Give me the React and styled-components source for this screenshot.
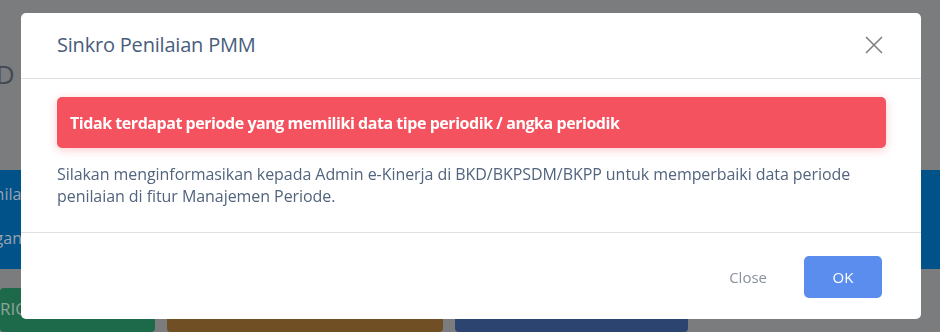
import styled, { createGlobalStyle } from "styled-components";

const GlobalStyle = createGlobalStyle`
  html, body {
    margin: 0;
    padding: 0;
    width: 940px;
    height: 332px;
    overflow: hidden;
    background: #7b7c7e;
  }
  * {
    box-sizing: border-box;
  }
`;

export default function App() {
  return (
    <>
      <GlobalStyle />
      <Page>
        <TopArea>
          <PageTitle>PD</PageTitle>
        </TopArea>
        <Banner>
          <BannerLine>Penilaian</BannerLine>
          <BannerLine>Pegangan</BannerLine>
        </Banner>
        <ButtonRow>
          <PageButton color="#1d6a4a" width="155px">
            RICIAN
          </PageButton>
          <PageButton color="#714f24" width="276px" />
          <PageButton color="#2b4570" width="233px" />
        </ButtonRow>
      </Page>

      <Modal>
        <Header>
          <Title>Sinkro Penilaian PMM</Title>
          <CloseIcon aria-label="close">
            <svg width="18" height="18" viewBox="0 0 18 18">
              <path
                d="M1 1 L17 17 M17 1 L1 17"
                stroke="#808080"
                strokeWidth="1.6"
                fill="none"
              />
            </svg>
          </CloseIcon>
        </Header>
        <Body>
          <Alert>Tidak terdapat periode yang memiliki data tipe periodik / angka periodik</Alert>
          <Message>
            Silakan menginformasikan kepada Admin e-Kinerja di BKD/BKPSDM/BKPP untuk memperbaiki
            data periode penilaian di fitur Manajemen Periode.
          </Message>
        </Body>
        <Footer>
          <TextButton>Close</TextButton>
          <PrimaryButton>OK</PrimaryButton>
        </Footer>
      </Modal>
    </>
  );
}

const Page = styled.div`
  width: 940px;
  height: 332px;
  display: flex;
  flex-direction: column;
  font-family: "Open Sans", sans-serif;
`;
const TopArea = styled.div`
  height: 170px;
  padding-top: 56px;
`;
const PageTitle = styled.div`
  margin-left: -20px;
  font-size: 26px;
  color: #1b2838;
  opacity: 0.6;
`;
const Banner = styled.div`
  height: 99px;
  background: #02528a;
  padding: 13px 0 0 0;
  display: flex;
  flex-direction: column;
  gap: 22px;
`;
const BannerLine = styled.div`
  margin-left: -24px;
  font-size: 16px;
  color: #9aa4af;
`;
const ButtonRow = styled.div`
  display: flex;
  gap: 12px;
  padding-top: 19px;
  flex: 1;
`;
const PageButton = styled.div`
  width: ${(p) => p.width};
  background: ${(p) => p.color};
  border-radius: 4px;
  color: #8fa39a;
  font-size: 17px;
  display: flex;
  align-items: center;
  overflow: hidden;
  padding: 0 0 4px 0;
`;

const Modal = styled.div`
  position: fixed;
  left: 21px;
  top: 13px;
  width: 900px;
  height: 306px;
  background: #ffffff;
  border-radius: 5px;
  display: flex;
  flex-direction: column;
  font-family: "Open Sans", sans-serif;
`;
const Header = styled.div`
  height: 66px;
  border-bottom: 1px solid #dee0e4;
  display: flex;
  align-items: center;
  justify-content: space-between;
  padding: 0 38px 0 36px;
`;
const Title = styled.h5`
  margin: 0;
  font-size: 20px;
  font-weight: 400;
  letter-spacing: -0.2px;
  color: #485d7c;
  padding-bottom: 2px;
`;
const CloseIcon = styled.div`
  width: 18px;
  height: 18px;
  display: flex;
  cursor: pointer;
  margin-bottom: 2px;
`;
const Body = styled.div`
  height: 154px;
  border-bottom: 1px solid #dee0e4;
  padding: 18px 35px 0 36px;
`;
const Alert = styled.div`
  height: 51px;
  background: #f4525f;
  border-radius: 5px;
  box-shadow: 0 2px 10px rgba(244, 82, 95, 0.3);
  color: #ffffff;
  font-weight: 700;
  font-size: 16px;
  display: flex;
  align-items: center;
  padding: 0 13px;
  letter-spacing: -0.45px;
`;
const Message = styled.p`
  margin: 15px 0 0;
  font-size: 16px;
  line-height: 22px;
  letter-spacing: -0.06px;
  color: #52647e;
`;
const Footer = styled.div`
  flex: 1;
  display: flex;
  justify-content: flex-end;
  align-items: flex-start;
  gap: 37px;
  padding: 23px 39px 0 0;
`;
const TextButton = styled.button`
  border: none;
  background: none;
  font-family: "Open Sans", sans-serif;
  font-size: 15px;
  color: #8a929e;
  height: 42px;
  padding: 0;
  cursor: pointer;
`;
const PrimaryButton = styled.button`
  width: 78px;
  height: 42px;
  border: none;
  border-radius: 5px;
  background: #5b8def;
  color: #ffffff;
  font-family: "Open Sans", sans-serif;
  font-size: 15px;
  cursor: pointer;
`;
